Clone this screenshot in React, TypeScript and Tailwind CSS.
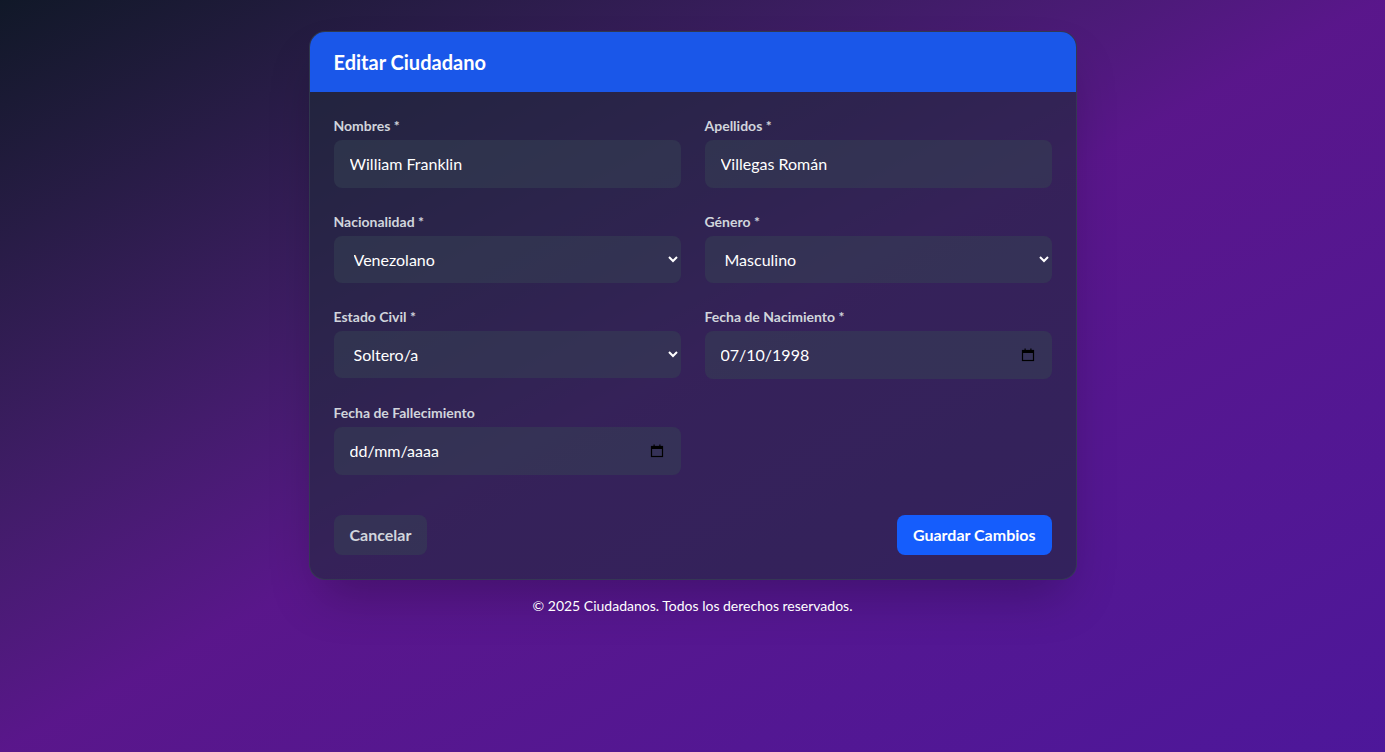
import React from "react";

const inputCls =
  "w-full rounded-lg bg-gray-700/50 px-4 py-3 text-base text-white outline-none";

const selectCls =
  "h-[47px] w-full rounded-lg bg-gray-700/50 px-4 text-base text-white outline-none";

function Field({ label, children }: { label: string; children: React.ReactNode }) {
  return (
    <div className="flex flex-col">
      <label className="mb-1 text-sm font-bold text-gray-300">{label}</label>
      {children}
    </div>
  );
}

function DateField({ value }: { value?: string }) {
  return (
    <div className="flex h-12 items-center rounded-lg bg-gray-700/50 pr-4">
      <input
        className="min-w-0 flex-1 bg-transparent py-3 pl-4 text-base text-white outline-none placeholder:text-white"
        placeholder="dd/mm/aaaa"
        defaultValue={value}
      />
      <svg width="16" height="16" viewBox="0 0 16 16" className="shrink-0">
        <rect x="2.5" y="3.5" width="11" height="10" fill="none" stroke="#000" strokeWidth="1.2" />
        <rect x="2" y="3" width="12" height="3" fill="#000" />
        <rect x="4.5" y="1.5" width="1.2" height="2" fill="#000" />
        <rect x="10.3" y="1.5" width="1.2" height="2" fill="#000" />
      </svg>
    </div>
  );
}

export default function App() {
  return (
    <div
      className="flex min-h-screen flex-col items-center bg-gradient-to-br from-gray-900 via-purple-900 to-violet-900 px-4 pt-[31px]"
      style={{ fontFamily: '"Segoe UI", Lato, "Noto Sans", sans-serif' }}
    >
      <div className="w-full max-w-3xl overflow-hidden rounded-2xl border border-gray-700/70 bg-gray-800/60 shadow-2xl">
        <div className="bg-[#1a57e9] px-6 py-4">
          <h1 className="text-xl font-bold text-white">Editar Ciudadano</h1>
        </div>
        <form className="p-6">
          <div className="grid grid-cols-2 gap-6">
            <Field label="Nombres *">
              <input className={inputCls} defaultValue="William Franklin" />
            </Field>
            <Field label="Apellidos *">
              <input className={inputCls} defaultValue="Villegas Román" />
            </Field>
            <Field label="Nacionalidad *">
              <select className={selectCls} defaultValue="Venezolano">
                <option>Venezolano</option>
                <option>Extranjero</option>
              </select>
            </Field>
            <Field label="Género *">
              <select className={selectCls} defaultValue="Masculino">
                <option>Masculino</option>
                <option>Femenino</option>
              </select>
            </Field>
            <Field label="Estado Civil *">
              <select className={selectCls} defaultValue="Soltero/a">
                <option>Soltero/a</option>
                <option>Casado/a</option>
                <option>Divorciado/a</option>
                <option>Viudo/a</option>
              </select>
            </Field>
            <Field label="Fecha de Nacimiento *">
              <DateField value="07/10/1998" />
            </Field>
            <Field label="Fecha de Fallecimiento">
              <DateField />
            </Field>
          </div>
          <div className="mt-10 flex items-center justify-between">
            <button
              type="button"
              className="rounded-lg bg-gray-700/50 px-4 py-2 text-base font-bold text-gray-300"
            >
              Cancelar
            </button>
            <button
              type="button"
              className="rounded-lg bg-blue-600 px-4 py-2 text-base font-bold text-white"
            >
              Guardar Cambios
            </button>
          </div>
        </form>
      </div>
      <p className="mt-4 text-sm text-white">
        © 2025 Ciudadanos. Todos los derechos reservados.
      </p>
    </div>
  );
}
